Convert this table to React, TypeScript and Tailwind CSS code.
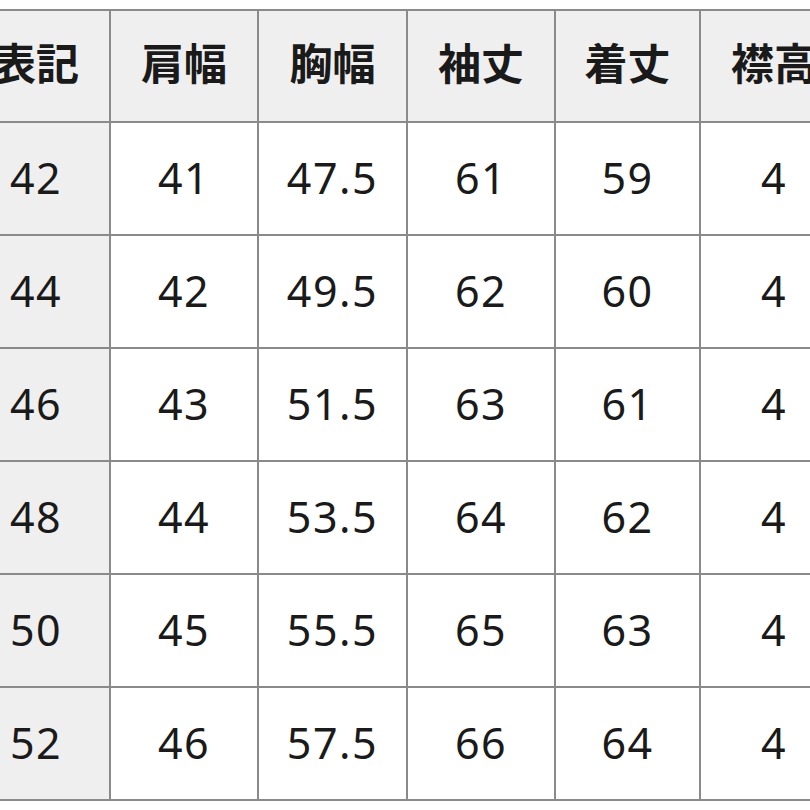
const headers = ['表記', '肩幅', '胸幅', '袖丈', '着丈', '襟高'];

const rows = [
  ['42', '41', '47.5', '61', '59', '4'],
  ['44', '42', '49.5', '62', '60', '4'],
  ['46', '43', '51.5', '63', '61', '4'],
  ['48', '44', '53.5', '64', '62', '4'],
  ['50', '45', '55.5', '65', '63', '4'],
  ['52', '46', '57.5', '66', '64', '4'],
];

const widths = ['w-[148px]', 'w-[148px]', 'w-[149px]', 'w-[148px]', 'w-[145px]', 'w-[148px]'];

export default function App() {
  return (
    <div className="w-[810px] h-[810px] overflow-hidden bg-white text-[#1a1a1a]">
      <table className="table-fixed border-collapse ml-[-39px] mt-[9px] w-[886px]">
        <colgroup>
          {widths.map((w, i) => (
            <col key={i} className={w} />
          ))}
        </colgroup>
        <thead>
          <tr>
            {headers.map((h) => (
              <th
                key={h}
                className="h-[112px] pb-[10px] border-2 border-[#8a8a8a] bg-[#efefef] text-[43px] font-bold text-center align-middle whitespace-nowrap overflow-hidden font-['Noto_Sans_CJK_JP',sans-serif]"
              >
                {h}
              </th>
            ))}
          </tr>
        </thead>
        <tbody>
          {rows.map((r) => (
            <tr key={r[0]}>
              {r.map((v, i) => (
                <td
                  key={i}
                  className={
                    i === 0
                      ? 'h-[113px] border-2 border-[#8a8a8a] bg-[#efefef] text-[43px] tracking-[1.5px] text-center align-middle font-["Noto_Sans",sans-serif]'
                      : 'h-[113px] border-2 border-[#8a8a8a] bg-white text-[43px] tracking-[1.5px] text-center align-middle font-["Noto_Sans",sans-serif]'
                  }
                >
                  {v}
                </td>
              ))}
            </tr>
          ))}
        </tbody>
      </table>
    </div>
  );
}
